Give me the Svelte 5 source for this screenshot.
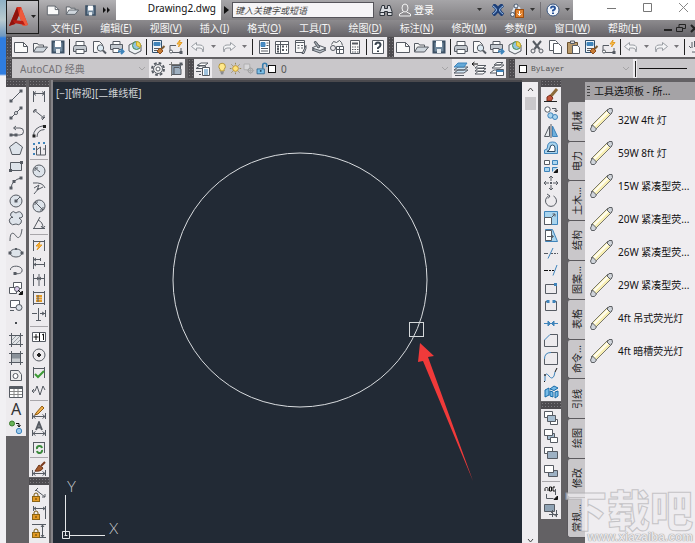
<script>
  const K = '#565b63';
  const p = (d, stroke = K, fill = 'none', w = 1) =>
    `<path d="${d}" stroke="${stroke}" fill="${fill}" stroke-width="${w}"/>`;
  const c = (x, y, r, stroke = K, fill = 'none') =>
    `<circle cx="${x}" cy="${y}" r="${r}" stroke="${stroke}" fill="${fill}"/>`;
  const dot = (x, y, fill = K, s = 2) =>
    `<rect x="${x - s / 2}" y="${y - s / 2}" width="${s}" height="${s}" fill="${fill}" stroke="none"/>`;
  const B = '#3f84bb';
  const LB = '#a9d4ee';
  const O = '#e39a25';
  const G = '#dde3ea';
  const posts = p('M2.5 3v11M13.5 3v11');
  const span = p('M2.5 5.5h11M5 3.5l-2.500 2l2.500 2M11 3.500l2.500 2l-2.500 2');
  const lowDim = p('M1.500 9v6M14.500 9v6M2 12.500h12M4.500 10.500l-2.500 2l2.500 2M11.500 10.500l2.500 2l-2.500 2');
  const lock = `<path d="M3 10V8a2 2 0 0 1 4 0v2" stroke="#7a5a12" fill="none"/><rect x="1.500" y="9.500" width="7" height="5" fill="${O}" stroke="#8a6314"/><path d="M5 11v2" stroke="#5b3f08"/>`;

  const icons = {
    newFile: p('M1.5 3.5h9l4 4v6h-13z', K, '#fafafa') + p('M10.5 3.5v4h4'),
    open: p('M1.5 13V4.500h4l1 1.500h5v2', K, '#f5f5f5') + p('M1.500 13l3-5h11l-4 5z', K, '#cfd6dd'),
    save: p('M2.5 2.500h11v11h-11z', '#3c5064', '#71889d', 2) + dot(8, 5, '#fff', 6) + dot(8, 12, '#e8edf1', 4),
    print: p('M4 6V2.500h8V6', K, '#fff') + p('M2.500 6.500h11l1 2v4h-13v-4z', K, '#c3c8ce') + p('M4 10.500h8v4h-8z', K, '#fff'),
    preview: p('M2.500 13V2.500h6l3 3V8M2.500 13.500h4', K, '#fafafa') + c(9.5, 9, 3.2, K, '#dceaf3') + p('M12 11.500l3 3', K, 'none', 2),
    plot: p('M4 5V2.500h7V5', K, '#fff') + p('M1.500 5.500h12v5h-12z', K, '#c3c8ce') + p('M4 9.500h6v4H4z', K, '#fff') + p('M9 12.500h5M12 10l2.500 2.500L12 15', B, 'none', 2),
    publish: p('M2 6l6-3l6 3v6l-6 3l-6-3z', K, '#eef2f5') + c(9.5, 6.5, 4, '#4a8c4a', '#8fc3df') + p('M9.500 2.500v4l3.500 2a4 4 0 0 0-3.500-6z', '#c9a92a', '#f3d95b'),
    match: p('M2.500 1.500h9v12h-9z', '#31506e', '#eef4f9') + p('M4 3.500h6v3H4z', B, B) + p('M4 9.500h5M4 11.500h3') + p('M14.500 7l-4 4', '#7a5a35', 'none', 2) + p('M7 12l3-3l3 3l-3 3z', '#8f4d1c', '#c67b34'),
    block: p('M2 12V6.500h6M13 9v4.500H4') + c(3, 12.5, 1.5, K, '#fff') + dot(13, 13.5, K, 3) + p('M12 1l-3 4h2.500l-1 3l3.500-4.500h-2.500z', O, '#ffc94d'),
    undo: p('M6.500 3.500l-5 4l5 4V9h3.500q3 0 3 4q2-7-3-7H6.500z', '#9a9ea4', '#f4f4f6'),
    redo: p('M9.500 3.500l5 4l-5 4V9H6q-3 0-3 4q-2-7 3-7h3.500z', '#9a9ea4', '#f4f4f6'),
    props: p('M3.500 1.500h10v13h-10z', K, '#fff') + p('M5 3.500h4v4H5z', B, '#4a8cc4') + p('M10.500 4h2M10.500 6.500h2M5 9.500h7M5 12h7'),
    center: p('M1.500 2.500h13v12h-13zM6.500 2.500v12M1.500 5.500h13', K, '#fff') + p('M3 7.500h2M3 10h2M3 12.500h2M8 7.500h2M12 7.500h1M8 11h2M12 11h1', K, 'none', 2),
    palette: p('M3.500 1.500h9v12h-9z', K, '#f8f8f8') + p('M4 3.500h8M5.500 6.500h2M5.500 9h2M9 6.500h2M9 9h2') + p('M10 14.500l4-8v3l-2 5z', K, '#c6cbd1'),
    sheets: p('M1 11l8 3l6-3l-8-3z', K, '#b9c1c9') + p('M1 9l8 2.500l6-2.500l-8-3z', K, '#eceff2') + p('M3 3l4 6l2-1l-4-5.500z', K, '#9fa6ad'),
    markup: p('M2.500 5.500l2-3l3 1l3-2l2 2l1 3', K, '#f3f3f3') + p('M7.500 7.500h7v7h-7z', K, '#fff') + p('M7.500 10.500h7M10.500 8v6') + c(4, 9, 2.5),
    calc: p('M3.500 1.500h9v13h-9z', K, '#fafafa') + p('M5 4.500h6', K, 'none', 2) + p('M5 8h1.500M7.500 8h1.500M10 8h1.500M5 10.500h1.500M7.500 10.500h1.500M10 10.500h1.500M5 13h1.500M7.500 13h1.500M10 13h1.500', K, 'none', 1),
    help: p('M2.500 1.500h11v13h-11z', K, '#fff') + p('M5.500 6q0-2.500 2.500-2.500T10.500 6Q10.500 7.500 8 9v1M8 11.500v1.500', '#3a4450', 'none', 2),
    cut: p('M4 2l6.500 8M12 2l-6.500 8', K, 'none', 2) + c(4, 12, 2) + c(12, 12, 2),
    copy: p('M2.500 1.500h6l2 2v8h-8z', K, '#fff') + p('M6.500 4.500h5l3 3v7h-8z', K, '#fff'),
    paste: p('M2.500 3.500h10v11h-10z', '#6b5230', '#b99a6b') + p('M5.500 2h4v2.500h-4z', K, '#ddd') + p('M7.500 6.500h5l2 2v6h-7z', K, '#fff'),
    pan: p('M4 9l-2-2M5 9V3M7.500 8V2M10 8V3M5 13h6V8', K, '#fff', 1),
    gear: `<circle cx="8" cy="8" r="6" stroke="${K}" fill="none" stroke-width="2" stroke-dasharray="2.700 2"/>` + c(8, 8, 4.5, K, '#ececee') + c(8, 8, 2, K, '#fff'),
    space: p('M3.500 4.500h9v9h-9z', K, '#8b9bab') + p('M1 3.500h14M3.500 1v14', '#777') + dot(13, 3, K, 3) + p('M6 6.500h5l2 2v5H6z', K, '#9dafc0'),
    layerProps: p('M1 7.500l4-2.500h6l-3 2.500zM2 4.500l4-2.500h7l-3 2.500z', K, '#fff') + p('M1 10.500h5M4 13.500h2') + p('M7.500 6.500h7v8h-7z', K, '#fff') + p('M9 9h4M9 11h4M9 13h4', B),
    bulb: p('M5 9Q3.500 7.500 3.500 5.500a4 4 0 0 1 8 0Q11.500 7.500 10 9v2H5z', '#a98625', '#ffe98a') + p('M5.500 12.500h4M6 14.500h3', K),
    sun: c(8, 8, 3.5, '#b98b21', '#ffe27a') + p('M8 1v2M8 13v2M1 8h2M13 8h2M3 3l1.500 1.500M11.500 11.500l1.500 1.500M3 13l1.500-1.500M11.500 4.500L13 3', '#8d7a3f'),
    freeze: p('M2.500 2.500h7v7h-7z', '#aaa', '#d8d8da') + c(10.5, 10.5, 3, '#999', '#c4c4c6') + p('M10.500 6v9M6 10.500h9', '#aaa'),
    unlock: p('M9.500 8V4a2.500 2.500 0 0 1 5 0v2', '#3a7fae', 'none', 2) + p('M2.500 8.500h9v6h-9z', '#27618c', '#7cc0e8') + dot(7, 11, '#173d5c', 2),
    layerA: p('M1 12l4-3h10l-4 3zM1 9l4-3h10l-4 3z', K, '#cfe6f5') + p('M1 6l4-4h9l-3 4z', B, '#65a9d8') + p('M2 14.500h9', K),
    layerB: p('M4 13l3-2.500h8l-3 2.500zM4 10l3-2.500h8l-3 2.500zM4 7l3-2.500h8l-3 2.500z', K, '#fff') + p('M1 3h6M1 3l2.500-2M1 3l2.500 2', '#111'),
    layerC: p('M1 12l4-3h8l-4 3zM3 7l4-3h8l-4 3zM5 4l3-2.500h6l-3 2.500z', K, '#fff') + p('M7.500 8.500h7v6h-7z', K, '#fff') + p('M7.500 10h7', B, 'none', 2),

    line: p('M3 13L13 3') + dot(3, 13, K, 3) + dot(13, 3, K, 3),
    xline: p('M3 13L13 3') + c(8, 8, 1.5, K, '#fff') + dot(3, 13, K, 3) + dot(13, 3, K, 3),
    pline: p('M3 12h5M3 12h9a3.500 3.500 0 0 0 0-7H6') + dot(3, 12, K, 3) + dot(8, 12, K, 3) + p('M8 3L5.500 5L8 7'),
    polygon: p('M8 2l6.500 5l-2.500 7.500H4L1.500 7z', K, G),
    rect: p('M2.500 4.500h11v8h-11z', K, G) + dot(2.5, 12.5, K, 3) + dot(13.5, 4.5, K, 3),
    arc: p('M3 13Q4 5 13 3') + dot(3, 13, K, 3) + dot(6, 6.5, K, 3) + dot(13, 3, K, 3),
    circle: c(8, 8, 6, K, G) + p('M8 8l4-4') + dot(8, 8, K, 3),
    cloud: p('M5 7.500Q1 6 3 3t5 0q4-3 6 1t-3 4q4 2 2 5t-5 1q-4 2-6-1t1-5.500z', K, G),
    spline: p('M2 14C2 3 6 6 8 9S13 11 14 2', K),
    ellipse: `<ellipse cx="8" cy="8" rx="6" ry="4" stroke="${K}" fill="${G}"/>` + dot(2, 8, K, 3) + dot(14, 8, K, 3) + dot(8, 4, K, 2),
    earc: p('M2.500 8C2 3 13 3 14 7.500S9 12 7 11.500') + dot(7, 11.5, K, 3),
    insert: p('M5.500 2.500h8v6h-8z', K, '#fff') + p('M1.500 7.500h7v6h-7z', K, '#fff') + c(9, 9, 2.5, K, '#dce') + p('M10 10l4 4M11 14.500h3.500V11z', '#111', '#111'),
    make: p('M2.500 3.500h9v7h-9z', K, '#fff') + c(11, 10.5, 3, K, G) + p('M2 13.500h4'),
    point: dot(8, 8, '#45494f', 2),
    hatch: p('M3.500 3.500h9v9h-9z', K, '#e2e4e7') + p('M4 8l4-4M4 12l8-8M8 12l4-4', '#9aa0a6') + p('M1 3.500h14M3.500 1v14M1 12.500h14M12.500 1v14', K),
    grad: p('M3.500 3.500h9v9h-9z', K, '#8a9199') + p('M4 9.500h8M4 11.500h8', '#c8ccd0', 'none', 2) + p('M1 3.500h14M3.500 1v14M1 12.500h14M12.500 1v14', K),
    region: p('M2.500 13.500v-10h8l3 4v6z', K, '#eee') + c(7.5, 9, 2.5, K, '#fff'),
    table: p('M1.500 2.500h13v11h-13z', K, '#fff') + p('M2 3.500h12', K, 'none', 3) + p('M2 7.500h12M2 10.500h12M6 5v8M10 5v8', '#888'),
    addsel: c(4, 4.5, 2.5, '#3b7a2f', '#69b357') + c(11, 12, 2.7, B, '#9cc9ec') + p('M8 4.500h3v3M9.500 6l1.500 2l1.500-2', '#111'),

    dimLinear: posts + span,
    dimAligned: p('M3 4l10 8M2 6l3-3M11 14l3-3M3 7V4h3M13 9v3h-3'),
    dimArc: p('M2.500 14Q2 4 13.500 2.500M6 14Q6 7 13.500 6.500') + dot(3, 13, '#222', 3) + dot(13.5, 3.5, '#222', 3),
    dimOrd: p('M5.500 5v9h9V4M5.500 9l4-3v8M12 8h3') + dot(3, 3, B) + dot(3, 8, B) + dot(3, 13, B) + dot(8, 2, B) + dot(13, 2, B),
    dimRad: c(8, 8, 6, K, G) + p('M4 5l5 4M4 8V5h3'),
    dimJog: p('M2 3Q12 2 14 8M3 8l5-3l-2 5l6-3M8 8l-5 6') ,
    dimDia: c(8, 8, 6, K, G) + p('M4 4l8 8M4 7V4h3M12 9v3H9'),
    dimAng: p('M2 13.500h12M3 13L9 2M7 5q5 2 5 8M10 11l2 2.500l2-2.500'),
    dimQuick: posts + p('M3 4.500h10') + p('M9 5l-4 4h3l-2 4l5-5H8z', O, '#ffb83a'),
    dimBase: p('M2.500 2v12M3 4.500h6M9.500 3v3M3 9.500h10M13.500 7v5M5 3l-2 1.500l2 1.500M5 8l-2 1.500l2 1.500'),
    dimCont: p('M2.500 2v12M8 2v12M13.500 2v12M3 6.500h10M6 5l2 1.500L6 8M10 5L8 6.500L10 8'),
    dimSpace: p('M2 2.500h12M2 13.500h12M2.500 1v14M13.500 1v14') + p('M5 6h6M5 8.500h6M5 11h6', O, 'none', 2) + p('M7 5v7'),
    dimBreak: p('M7.500 1v13M1 6.500h5M9 6.500h5M14.500 3v7M5 13.500h5M11 5l2.500 1.500L11 8'),
    tol: p('M1.500 3.500h13v9h-13z', K, '#fff') + p('M5 5v6M2.500 8h5M8.500 4v8', '#111', 'none', 1) + p('M11 6l1.500-1v6', '#111', 'none', 1),
    center2: c(8, 8, 6) + p('M8 6v4M6 8h4', '#222', 'none', 2),
    inspect: posts + p('M3 4.500h10') + p('M4 10l3 3l6-6', '#3c9a35', 'none', 2),
    jogLine: p('M1 9h3l2-5l3 9l3-9l2 4M1 9l2-2M1 9l2 2'),
    dimEdit: lowDim + p('M5 9l6-7l2 2l-6 6l-3 1z', '#8f5b14', '#f0b04b'),
    dimText: lowDim + p('M5 9L8 1.500L11 9M6 6.500h4', K, 'none', 2),
    dimUpd: posts + p('M3 3.500h10') + p('M6 10a2.500 2.500 0 0 1 5-1M11 11a2.500 2.500 0 0 1-5 1', '#3b8a3b', 'none', 2),
    dimStyle: lowDim + p('M14 1l-4 4', '#7a3a1c', 'none', 2) + p('M4 10l4-6l4 3q-2 4-8 3z', '#6e3517', '#a55a2d'),
    lockA: p('M5 3l9 7M7 1L4 4M14 7v3h-3') + lock,
    lockB: p('M2.500 1v5M14.500 1v13M3 3.500h11M5 2L3 3.500L5 5M12 2l2 1.500L12 5') + lock,
    lockC: p('M1 1.500h14M9 14.500h6M11.500 2v12M10 4l1.500-2L13 4M10 12l1.500 2l1.500-2') + lock,

    erase: p('M14 1L8 8', '#8c6a3a', 'none', 3) + p('M4 9l3-2l3 3l-2 3H4z', '#7a2f1c', '#c4533a') + p('M1 13.500h13', '#222'),
    copyObj: c(4.5, 4.5, 2.7, K, '#fff') + c(7.5, 10.5, 2.7, B, LB) + c(12, 12, 2.5, B, LB) + p('M9 3.500h4v3M11.500 5L13 7l1.500-2'),
    mirror: p('M6.500 3v10.500h-5z', K, '#e5e8eb') + p('M9.500 3v10.500h5z', B, '#6fb0dc') + p('M8 1v14', K),
    offset: p('M1.500 13.500V10q3 0 3-3q0-5 5-5t5 5v6.500z', B, LB) + p('M4 11.500h8V8q0-3-2.500-3T7 8q0 2-3 3.500z', '#2b4a66', '#fff'),
    array: p('M1.500 2.500h5v4h-5z', K, '#fff') + p('M9.500 2.500h5v4h-5zM1.500 9.500h5v4h-5z', B, LB) + p('M9.500 13.500v-4h5', B, LB) + p('M11 14.500h3.500V11z', '#111', '#111'),
    move: p('M8 1v5M8 10v5M1 8h5M10 8h5M6 3l2-2l2 2M6 13l2 2l2-2M3 6L1 8l2 2M13 6l2 2l-2 2') + dot(8, 8, K, 2),
    rotate: p('M10.500 3A5.500 5.500 0 1 1 5.500 3M4 1l3 2l-2 2.500'),
    scale: p('M1.500 1.500h13v13h-13z', B, LB) + p('M1.500 7.500h7v7h-7z', K, '#fff') + p('M9 7l3-3M9.500 4H12v2.500'),
    stretch: p('M2.500 2.500h7l5 12h-12z', B, LB) + p('M2.500 3.500h6v10h-6z', K, '#fff') + p('M4 9.500h6M8 7.500l2.500 2l-2.500 2'),
    trim: p('M1 8.500h4M8 8.500h2M11 8.500h2M14 8.500h1', K) + p('M5 13.500L10 3', B),
    extend: p('M1 8.500h4M6 8.500h2M9 8.500h2', '#111') + p('M10 13.500L14 3', B),
    breakPt: p('M13.500 6v7.500h-11V4.500H11') + dot(12.500, 4.5, B, 3),
    brk: p('M4 4.500H2.500v9h11v-9H12') + dot(5, 4.500, B, 3) + dot(11, 4.5, B, 3),
    join: p('M1 8.500h14', B) + p('M5 6l2.500 2.500L5 11zM11 6L8.500 8.500L11 11z', B, B),
    chamfer: p('M7 2.500h7.500v12h-13V8') + p('M1.500 8L7 2.500', B, 'none', 1),
    fillet: p('M8 2.500h6.500v12h-13V9') + p('M1.500 9Q1.500 2.500 8 2.500', B, 'none', 1),
    blend: p('M2 14V9M2 9q1-4 4 0t5 0l1-4', B) + p('M12 5l2-4M2 14l-1 1', '#111') + dot(2, 8, K, 2),
    explode: p('M2 6l4-2v7l-4 2zM7 5l4-3l4 2l-4 2.500zM7 7l3 1v5l-3-1zM12 8l3-1v5l-3 2z', '#176aa8', '#77bbe7'),
    ord1: p('M1.500 1.500h8v6h-8z', K, '#fff') + p('M7.500 9.500h7v5h-7z', K, '#fff') + p('M4.500 5.500h8v6h-8z', K, '#a8bfd2'),
    ord2: p('M4.500 5.500h7v6h-7z', K, '#a8bfd2') + p('M1.500 1.500h8v6h-8zM7.500 9.500h7v5h-7z', K, '#fff'),
    ord3: p('M1.500 2.500h8v6h-8z', K, '#fff') + p('M4.500 6.500h10v7h-10z', K, '#9db1c4'),
    ord4: p('M5.500 7.500h9v6h-9z', K, '#9db1c4') + p('M1.500 2.500h9v7h-9z', K, '#fff'),
    textFront: p('M2 6V3.500L3.500 2L5 3.500V6M6.500 2v4h2V2h-2M12 2h-2v4h2', '#111') + p('M3.500 9v4.500h7M12.500 4v6') + p('M11 14.500h3.500V11z', '#111', '#111'),
    hatchBack: p('M1.500 2.500h10v7h-10z', K, '#8fa3b5') + p('M6 12.500h9M9.500 8v7M13.500 8v7M8 10l6 5', K),
  };

  const std = ['newFile', 'open', 'save', '|', 'print', 'preview', 'plot', 'publish', '|'];
  const rowA = [...std, 'match', 'block', '|', 'undo', 'v', 'redo', 'v', '|', 'props', 'center', 'palette', 'sheets', 'markup', 'calc', '|', 'help'];
  const rowB = [...std, 'cut', 'copy', 'paste', 'match', 'block', '|', 'undo', 'v', 'redo', 'v', '|', 'pan'];
  const draw = ['line', 'xline', 'pline', 'polygon', 'rect', 'arc', 'circle', 'cloud', 'spline', 'ellipse', 'earc', 'insert', 'make', 'point', 'hatch', 'grad', 'region', 'table', 'A', 'addsel'];
  const dims = ['dimLinear', 'dimAligned', 'dimArc', 'dimOrd', '|', 'dimRad', 'dimJog', 'dimDia', 'dimAng', '|', 'dimQuick', 'dimBase', 'dimCont', 'dimSpace', 'dimBreak', '|', 'tol', 'center2', 'inspect', 'jogLine', '|', 'dimEdit', 'dimText', 'dimUpd', '|', 'dimStyle'];
  const constraints = ['lockA', 'lockB', 'lockC', 'lockA'];
  const modify = ['erase', 'copyObj', 'mirror', 'offset', 'array', 'move', 'rotate', 'scale', 'stretch', 'trim', 'extend', 'breakPt', 'brk', 'join', 'chamfer', 'fillet', 'blend', 'explode'];
  const order = ['ord1', 'ord2', 'ord3', 'ord4', '|', 'textFront', 'hatchBack'];
  const menus = [['文件', 'F'], ['编辑', 'E'], ['视图', 'V'], ['插入', 'I'], ['格式', 'O'], ['工具', 'T'], ['绘图', 'D'], ['标注', 'N'], ['修改', 'M'], ['参数', 'P'], ['窗口', 'W'], ['帮助', 'H']];
  const tabs = ['机械', '电力', '土木...', '结构', '图案...', '表格', '命令...', '引线', '绘图', '修改', '常规...'];
  const tools = ['32W 4ft 灯', '59W 8ft 灯', '15W 紧凑型荧...', '20W 紧凑型荧...', '26W 紧凑型荧...', '29W 紧凑型荧...', '4ft 吊式荧光灯', '4ft 暗槽荧光灯'];
</script>

{#snippet icon(name, size = 16)}
  <svg class="icon" width={size} height={size} viewBox="0 0 16 16" fill="none" aria-hidden="true">{@html icons[name]}</svg>
{/snippet}

{#snippet chevron()}
  <svg class="chev" width="8" height="6" viewBox="0 0 8 6" fill="none" aria-hidden="true"><path d="M1 1l3 3l3-3" stroke="#a5a4a6" /></svg>
{/snippet}

{#snippet caret()}
  <svg class="caret" width="5" height="4" viewBox="0 0 5 4" aria-hidden="true"><path d="M0 0h5L2.500 3z" fill="currentColor" /></svg>
{/snippet}

{#snippet bar(items, cls)}
  <div class="bar {cls}" role="toolbar">
    <i class="grip"></i>
    {#each items as it}
      {#if it === '|'}
        <i class="sep"></i>
      {:else if it === 'v'}
        <button class="drop" aria-label="more">{@render caret()}</button>
      {:else if it === 'A'}
        <button class="tool letter">A</button>
      {:else}
        <button class="tool" aria-label={it}>{@render icon(it)}</button>
      {/if}
    {/each}
  </div>
{/snippet}

<div class="screen">
  <div class="desktop"></div>
  <div class="app">
    <header>
      <button class="logo" aria-label="Application menu">
        <svg width="20" height="22" viewBox="0 0 20 22" aria-hidden="true">
          <path d="M8 1h4l7 18l-5 1l-4-11l-4 9l-6 2z" fill="#d8301f" />
          <path d="M8 1l2 8l-4 9l-6 2z" fill="#8f130d" />
          <path d="M12 1l7 18l-5 1l-4-11z" fill="#ee5a3c" />
          <path d="M4 14l10 1l2 4l-11-2z" fill="#b81d14" />
        </svg>
        {@render caret()}
      </button>
      <div class="head">
        <div class="title">
          <div class="quick">
            <button class="tool" aria-label="new">{@render icon('newFile', 14)}</button>
            <button class="tool" aria-label="open">{@render icon('open', 14)}</button>
            <button class="tool" aria-label="save">{@render icon('save', 13)}</button>
            <button class="tool more" aria-label="more"><svg width="7" height="6" viewBox="0 0 7 6"><path d="M0 0l3 3l-3 3zM4 0l3 3l-3 3z" fill="#111" /></svg></button>
          </div>
          <span class="doc">Drawing2.dwg</span>
          <div class="info">
            <button class="play" aria-label="collapse"><svg width="5" height="8" viewBox="0 0 5 8"><path d="M0 0l5 4l-5 4z" fill="#111" /></svg></button>
            <input type="text" placeholder="键入关键字或短语" aria-label="键入关键字或短语" />
            <button class="plain" aria-label="find">
              <svg width="14" height="14" viewBox="0 0 14 14" fill="#d8dbe0" stroke="#2d333b"><path d="M3 2.500h2.500v3h3v-3H11l2 6v4H8.500v-4h-3v4H1v-4z" /><path d="M1 9.500h4.500M8.500 9.500H13" /></svg>
            </button>
            <button class="plain login">
              <svg width="14" height="14" viewBox="0 0 14 14" fill="none" stroke="#f2f2f2"><ellipse cx="7" cy="5" rx="3" ry="4" /><path d="M5.500 9l-4 2v2h11v-2l-4-2" /></svg>
              登录
            </button>
            <span class="push">{@render caret()}</span>
            <svg width="14" height="12" viewBox="0 0 14 12" fill="none" aria-hidden="true"><path d="M2 1q8 4 0 10M12 1q-8 4 0 10" stroke="#1e3f78" stroke-width="4" /><path d="M2 2q7 4 0 8M12 2q-7 4 0 8" stroke="#9cc4f0" stroke-width="1" /></svg>
            <svg width="15" height="15" viewBox="0 0 15 15" fill="none" aria-hidden="true"><path d="M1.500 11.500L6 2l4 4M2 12h4" stroke="#dfe6ef" stroke-width="2" /><circle cx="6" cy="3" r="2" fill="#e9eef5" stroke="#46566b" /><circle cx="2.500" cy="11.500" r="2" fill="#e9eef5" stroke="#46566b" /><rect x="5.500" y="6.500" width="8" height="8" fill="#e0812d" stroke="#9b4d10" /><path d="M9.500 8v4M7.500 10.500l2 2l2-2" stroke="#fff" /></svg>
            {@render caret()}
            <i class="tsep"></i>
            <svg width="14" height="14" viewBox="0 0 14 14" fill="none" aria-hidden="true"><circle cx="7" cy="7" r="6" fill="#f3f7fc" stroke="#39567f" /><path d="M5 5.500Q5 3.500 7 3.500T9 5.500Q9 6.500 7 7.500v1M7 9.500v1.500" stroke="#28549a" stroke-width="2" /></svg>
            {@render caret()}
          </div>
          <div class="win">
            <button aria-label="minimize"><svg width="9" height="9" viewBox="0 0 9 9"><path d="M0 5.500h9" stroke="#777" /></svg></button>
            <button aria-label="maximize"><svg width="9" height="9" viewBox="0 0 9 9" fill="none"><path d="M.5.500h8v8h-8z" stroke="#777" /></svg></button>
            <button aria-label="close"><svg width="9" height="9" viewBox="0 0 9 9"><path d="M0 0l9 9M9 0L0 9" stroke="#888" /></svg></button>
          </div>
        </div>
        <nav>
          {#each menus as [label, key]}
            <button>{label}(<u>{key}</u>)</button>
          {/each}
          <span class="mdi">
            <svg width="31" height="10" viewBox="0 0 31 10" fill="none" stroke="#222" aria-hidden="true"><path d="M0 7h8" stroke-width="2" /><path d="M12.500 4.500h6v4h-6zM15 4V1.500h6.500v4H19" /><path d="M27 2l7 7M34 2l-7 7" stroke-width="2" /></svg>
          </span>
        </nav>
      </div>
    </header>

    <div class="row">
      {@render bar(rowA, 'wide')}
      {@render bar(rowB, 'rest')}
    </div>

    <div class="row second">
      <div class="bar">
        <i class="grip"></i>
        <div class="combo space">
          <select aria-label="工作空间"><option>AutoCAD 经典</option></select>
          {@render chevron()}
        </div>
        <button class="tool" aria-label="settings">{@render icon('gear')}</button>
        <button class="tool" aria-label="workspace">{@render icon('space')}</button>
      </div>
      <div class="bar grow">
        <i class="grip"></i>
        <button class="tool" aria-label="layer properties">{@render icon('layerProps')}</button>
        <div class="combo layer grow">
          {@render icon('bulb', 13)}
          {@render icon('sun', 13)}
          {@render icon('freeze', 13)}
          {@render icon('unlock', 13)}
          <i class="swatch"></i>
          <select class="zero" aria-label="图层"><option>0</option></select>
          {@render chevron()}
        </div>
        <button class="tool" aria-label="make current">{@render icon('layerA')}</button>
        <button class="tool" aria-label="previous layer">{@render icon('layerB')}</button>
        <button class="tool" aria-label="layer states">{@render icon('layerC')}</button>
      </div>
      <div class="bar">
        <i class="grip"></i>
        <div class="combo color">
          <i class="swatch"></i>
          <select class="mono" aria-label="颜色"><option>ByLayer</option></select>
          {@render chevron()}
        </div>
        <i class="sep"></i>
        <div class="combo ltype"><i></i></div>
      </div>
    </div>

    <main>
      <aside class="dock left">
        {@render bar(draw, 'vert draw')}
      </aside>
      <aside class="dock second-dock">
        {@render bar(dims, 'vert dims')}
        {@render bar(constraints, 'vert cons')}
      </aside>

      <section class="canvas">
        <p>[−][俯视][二维线框]</p>
        <svg class="drawing" aria-hidden="true">
          <circle cx="247" cy="198" r="127" fill="none" stroke="#d9dcdf" />
          <rect x="356.500" y="240.500" width="14" height="14" fill="none" stroke="#d5d8da" />
          <path d="M367 261l14 13l-6 1l45 124L370 279l-5 1z" fill="#f03a3a" />
        </svg>
        <svg class="ucs" width="60" height="65" viewBox="0 0 60 65" fill="none" aria-hidden="true">
          <path d="M4.500 17v40M8 57.500h36M1.500 53.500h7v7h-7zM3.500 57.500h3" stroke="#e6e8ea" />
          <text x="6" y="14">Y</text>
          <text x="48" y="56">X</text>
        </svg>
      </section>

      <div class="scroll">
        <svg width="7" height="5" viewBox="0 0 7 5" fill="none"><path d="M1 4l2.500-3L6 4" stroke="#444" /></svg>
        <i class="thumb"></i>
        <svg class="down" width="7" height="5" viewBox="0 0 7 5" fill="none"><path d="M1 1l2.500 3L6 1" stroke="#444" /></svg>
      </div>

      <aside class="dock right">
        {@render bar(modify, 'vert mod')}
        {@render bar(order, 'vert order')}
      </aside>

      <div class="tabs" role="tablist">
        {#each tabs as t}
          <button role="tab"><span>{t}</span></button>
        {/each}
      </div>

      <section class="palette">
        <h2><i></i>工具选项板 - 所...</h2>
        <ul>
          {#each tools as t}
            <li>
              <button>
                <svg width="26" height="26" viewBox="0 0 26 26" fill="none" aria-hidden="true">
                  <path d="M2 19L19 2l4 4L6 23z" fill="#f8efb4" stroke="#77766c" />
                  <path d="M5 19L20 4" stroke="#fffdf0" stroke-width="2" />
                  <path d="M1.500 22l2-4l4 4l-2 2.500h-3zM18 4l2-2.500h3l.500 3l-2 3z" fill="#cfd4da" stroke="#5d6064" />
                </svg>
                {t}
              </button>
            </li>
          {/each}
        </ul>
      </section>
    </main>
  </div>
  <div class="mark"><b>下载吧</b><span>www.xiazaiba.com</span></div>
</div>

<style>
  :global(body) { margin: 0; }
  .screen {
    position: relative;
    display: flex;
    height: 100vh;
    overflow: hidden;
    background: #efedf0;
    font: 10px/14px "Noto Sans", "Noto Sans CJK SC", sans-serif;
    color: #111;
  }
  button { border: 0; padding: 0; background: none; font: inherit; color: inherit; }
  i { flex: none; display: block; }
  svg { flex: none; }
  .desktop {
    flex: none;
    width: 6px;
    background: linear-gradient(#8fb0c4 0, #b9cbd0 20px, #6f98c0 36px, #2f7de0 38px, #2f7de0 74px, #f1f0f3 76px);
  }
  .app { flex: 1; min-width: 0; display: flex; flex-direction: column; background: #636164; }

  header { display: flex; height: 36px; background: #737174; }
  .logo {
    flex: none; width: 33px; height: 34px; box-sizing: border-box;
    display: flex; align-items: center; justify-content: center; gap: 2px;
    border: 1px solid #1c1c1c; background: linear-gradient(#c4c3c6, #848286); color: #222;
  }
  .head { flex: 1; min-width: 0; display: flex; flex-direction: column; }
  .title { display: flex; height: 20px; background: #fff; }
  .quick { flex: none; display: flex; align-items: center; width: 77px; padding-left: 4px; box-sizing: border-box; background: linear-gradient(#b2b1b4, #858386); }
  .quick .tool { width: 19px; }
  .quick .more { width: 12px; }
  .doc { flex: none; width: 105px; text-align: right; padding-right: 5px; box-sizing: border-box; line-height: 16px; }
  .info { flex: 1; display: flex; align-items: center; gap: 5px; padding-right: 3px; background: linear-gradient(#a6a5a8, #828083); color: #333; }
  .play { width: 11px; height: 20px; margin-right: -5px; display: grid; place-items: center; }
  .info input {
    width: 142px; height: 16px; box-sizing: border-box; padding: 0 2px; border: 1px solid #55545a; border-radius: 0;
    background: #f5f4f6; font: italic 9px/14px "Noto Sans", "Noto Sans CJK SC", sans-serif;
  }
  .info input::placeholder { color: #444; opacity: 1; }
  .plain { display: flex; align-items: center; gap: 2px; color: #fff; }
  .push { margin-left: auto; display: flex; margin-right: 4px; }
  .tsep { width: 1px; height: 16px; background: #747276; }
  .win { flex: none; width: 122px; padding: 0 0 6px 20px; box-sizing: border-box; display: grid; grid-template-columns: repeat(3, 36px); }
  .win button { display: grid; place-items: center; }

  nav { flex: 1; display: flex; align-items: center; gap: 18px; padding-left: 12px; background: linear-gradient(#8d8b8e, #67656a); color: #f6f6f6; overflow: hidden; }
  nav button { flex: none; white-space: nowrap; }
  .mdi { flex: none; display: flex; margin-left: auto; }

  .row { display: flex; gap: 1px; height: 20px; margin-top: 1px; }
  .row.second { margin-top: 2px; gap: 3px; height: 19px; }
  .bar { display: flex; align-items: center; flex: none; background: #edebee; overflow: hidden; }
  .grip {
    align-self: stretch; width: 6px; background-color: #4d4b4f;
    background-image: radial-gradient(#7c7a7e 1px, transparent 1px); background-size: 3px 3px;
  }
  .wide { width: 381px; justify-content: space-between; }
  .rest { flex: 1; min-width: 0; }
  .grow { flex: 1; min-width: 0; }
  .tool { flex: none; width: 18px; height: 17px; display: grid; place-items: center; }
  .drop { flex: none; width: 12px; height: 17px; display: grid; place-items: center; color: #77757a; }
  .sep { width: 4px; height: 16px; background: linear-gradient(#222, #222) center / 1px 100% no-repeat; }

  .combo { display: flex; align-items: center; height: 19px; padding-right: 3px; box-sizing: border-box; background: #c9c7ca; color: #747276; }
  .space { width: 137px; }
  .layer { padding-left: 4px; }
  .color { width: 118px; padding-left: 4px; }
  select { appearance: none; flex: 1; min-width: 0; border: 0; padding: 0 8px; background: none; color: inherit; font: inherit; line-height: 18px; opacity: 1; }
  .mono { font: 8px/18px "Liberation Mono", monospace; padding: 0 4px; color: #555; }
  .zero { padding: 0 5px; color: #555; }
  .swatch { width: 6px; height: 6px; border: 1px solid #111; background: #fff; }
  .ltype { width: 58px; padding: 0 2px; }
  .ltype i { width: 48px; height: 1px; background: #111; }

  main { flex: 1; min-height: 0; display: flex; margin-top: 2px; }
  .dock { flex: none; display: flex; flex-direction: column; overflow: hidden; }
  .left { width: 22px; }
  .second-dock { width: 25px; padding-left: 1px; box-sizing: border-box; gap: 1px; border-right: 2px solid #858387; }
  .right { width: 29px; padding-left: 3px; box-sizing: border-box; gap: 1px; }
  .vert { flex-direction: column; justify-content: space-between; width: 20px; }
  .vert .grip { width: 20px; height: 7px; }
  .vert .sep { width: 18px; height: 4px; background: linear-gradient(#a8a6aa, #a8a6aa) center / 100% 1px no-repeat; }
  .draw { height: 356px; }
  .dims { height: 397px; }
  .cons { height: 80px; }
  .mod { height: 321px; }
  .order { height: 117px; }
  .letter { font: 16px/17px "Noto Sans", sans-serif; color: #333; }

  .canvas { position: relative; flex: 1; min-width: 0; background: #222a35; border-top: 2px solid #4b4a4e; overflow: hidden; color: #d3d5d8; }
  .canvas p { margin: 4px 3px; }
  .drawing { position: absolute; inset: 0; width: 100%; height: 100%; }
  .ucs { position: absolute; left: 8px; bottom: 0; }
  .ucs text { font: 300 15px Lato, sans-serif; fill: #c9ccd0; }

  .scroll { flex: none; width: 16px; display: flex; flex-direction: column; align-items: center; gap: 5px; padding: 5px 0 0; box-sizing: border-box; margin-top: 2px; background: #efedf0; }
  .thumb { width: 11px; height: 13px; background: #cac8cb; }
  .down { margin-top: auto; }

  .tabs { flex: none; width: 18px; display: grid; grid-auto-rows: 1fr; margin: 22px 0 5px; }
  .tabs button { display: grid; place-items: center; min-height: 0; background: #c9c7ca; border: 1px solid #5b595d; border-width: 0 0 1px 1px; border-radius: 3px 0 0 3px; overflow: hidden; }
  .tabs span { writing-mode: vertical-rl; text-orientation: sideways; transform: rotate(180deg); white-space: nowrap; color: #222; }

  .palette { flex: none; width: 110px; margin-top: 2px; background: #efedf0; }
  .palette h2 { display: flex; align-items: center; gap: 4px; height: 18px; margin: 0; padding-left: 2px; background: #a5a3a6; font: inherit; white-space: nowrap; }
  .palette h2 i { width: 3px; height: 10px; background: repeating-linear-gradient(#444 0 1px, transparent 1px 3px); }
  ul { list-style: none; margin: 0; padding: 3px 0 0 4px; }
  li { height: 33px; }
  li button { display: flex; align-items: center; gap: 3px; height: 33px; white-space: nowrap; }

  .mark { position: absolute; right: 2px; bottom: 0; display: flex; flex-direction: column; align-items: flex-end; opacity: 0.7; pointer-events: none; }
  .mark b { font: 900 43px/46px "Noto Sans CJK SC", sans-serif; color: #eeecef; -webkit-text-stroke: 1px #b3b2b5; }
  .mark span { font: bold 12px/12px "Liberation Sans", sans-serif; color: #e4e3e6; text-shadow: 0 0 1px #666, 0 0 1px #888; }
</style>
